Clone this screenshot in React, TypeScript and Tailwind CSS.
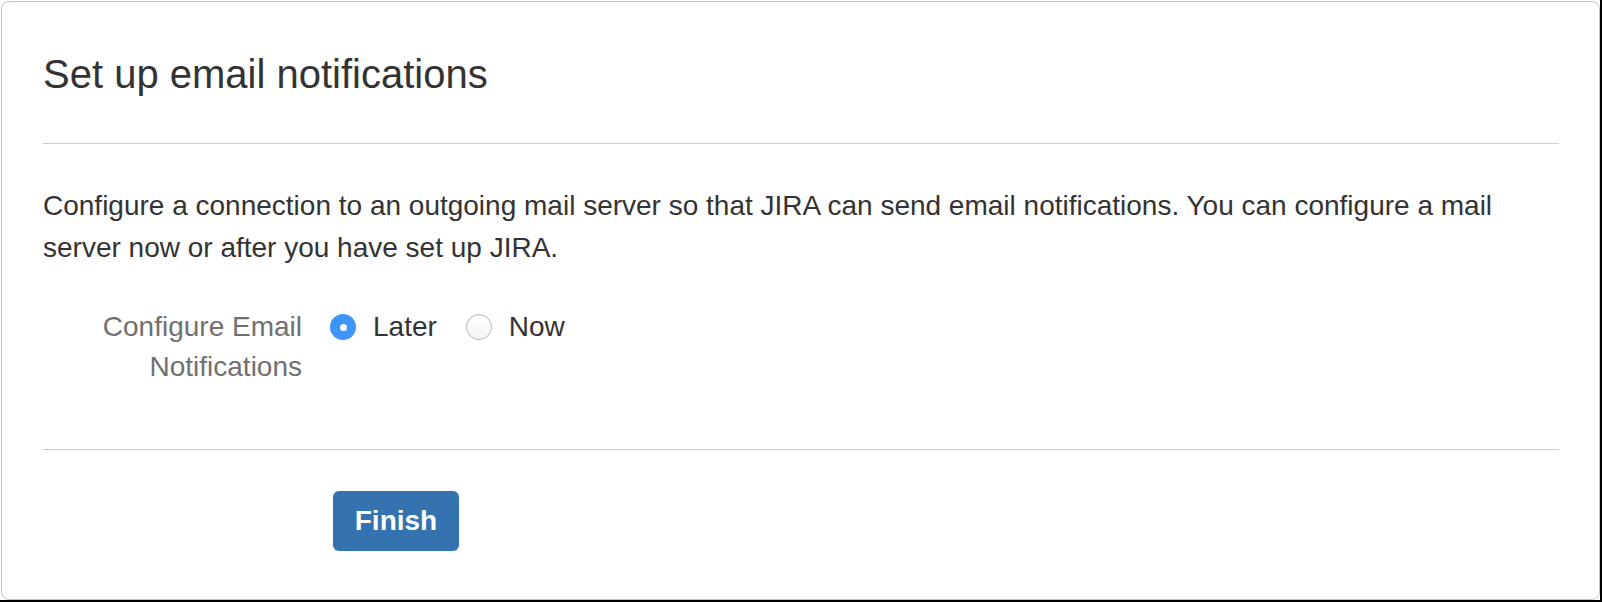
import * as React from 'react';

const font = { fontFamily: '"Liberation Sans", Arial, sans-serif' };

const Radio: React.FC<{ checked?: boolean; label: string }> = ({ checked, label }) => {
  return (
    <label className="flex items-center">
      {checked ? (
        <span className="flex h-[26px] w-[26px] items-center justify-center rounded-full bg-[#3d95f7]">
          <span className="h-[7px] w-[7px] rounded-full bg-white" />
        </span>
      ) : (
        <span className="h-[26px] w-[26px] rounded-full border border-[#b8b8b8] bg-gradient-to-b from-white to-[#f4f4f4] shadow-[inset_0_1px_1px_rgba(0,0,0,0.06)]" />
      )}
      <span className="ml-[17px] text-[#333333]">{label}</span>
    </label>
  );
};

export default function App() {
  return (
    <div
      className="h-[602px] w-[1602px] border-b-2 border-r-2 border-black bg-white pl-px pt-px"
      style={font}
    >
      <div className="h-full rounded-[8px] border border-[#c4c4c4] pl-[41px] pr-[40px] pt-[48px]">
        <h1 className="text-[40px] leading-[48px] font-normal text-[#333333]">
          Set up email notifications
        </h1>

        <div className="mt-[45px] h-px bg-[#cccccc]" />

        <p className="mt-[41px] text-[28px] leading-[42px] text-[#333333]">
          Configure a connection to an outgoing mail server so that JIRA can send email notifications. You can configure a mail
          server now or after you have set up JIRA.
        </p>

        <div className="mt-[38px] flex text-[28px] leading-[40px]">
          <div className="w-[259px] text-right text-[#707070]">
            Configure Email
            <br />
            Notifications
          </div>
          <div className="ml-[28px] flex h-[40px] items-center gap-[29px]">
            <Radio checked label="Later" />
            <Radio label="Now" />
          </div>
        </div>

        <div className="mt-[62px] h-px bg-[#cccccc]" />

        <button className="ml-[290px] mt-[41px] h-[60px] w-[126px] rounded-[6px] bg-[#3572b0] text-[28px] font-bold text-white">
          Finish
        </button>
      </div>
    </div>
  );
}
